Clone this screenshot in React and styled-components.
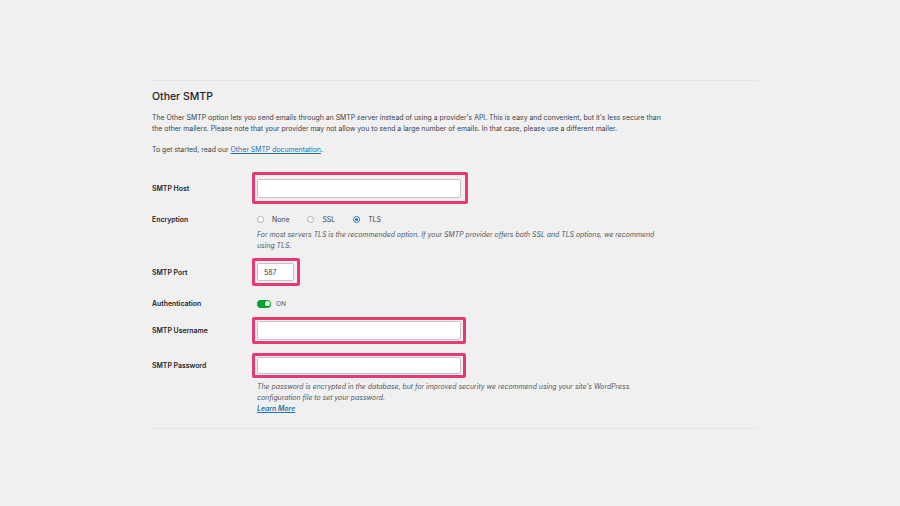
import styled, { createGlobalStyle } from 'styled-components';

const GlobalStyle = createGlobalStyle`
  html, body {
    margin: 0;
    padding: 0;
    background: #f0f0f1;
  }
  body {
    font-family: Inter, "Liberation Sans", Arial, sans-serif;
    color: #3c434a;
  }
`;

const Page = styled.div`
  min-height: 506px;
  padding-top: 80px;
  box-sizing: border-box;
`;

const Section = styled.div`
  margin-left: 152px;
  width: 606px;
  border-top: 1px solid #e6e6e7;
  border-bottom: 1px solid #e6e6e7;
  padding-bottom: 14px;
`;

const Heading = styled.h2`
  margin: 9px 0 0;
  font-size: 10.5px;
  line-height: 14px;
  font-weight: 500;
  color: #1d2327;
`;

const Desc = styled.p`
  margin: ${p => p.$top || 0}px 0 0;
  font-size: 6.9px;
  line-height: 11px;
  color: #3c434a;
`;

const Link = styled.a`
  color: #2271b1;
  text-decoration: underline;
`;

const Row = styled.div`
  display: grid;
  grid-template-columns: 105px 1fr;
  align-items: ${p => p.$align || 'center'};
  margin-top: ${p => p.$top}px;
`;

const Label = styled.div`
  font-size: 6.9px;
  line-height: 11px;
  font-weight: 600;
  color: #1d2327;
`;

const Field = styled.div`
  display: flex;
  flex-direction: column;
  align-items: flex-start;
`;

const Highlight = styled.div`
  border: 3px solid #ea386e;
  border-radius: 2px;
  padding: ${p => p.$pad};
  margin-left: -5px;
  display: flex;
`;

const Input = styled.div`
  width: ${p => p.$w}px;
  height: ${p => p.$h}px;
  background: #fff;
  border: 1px solid #c3c4c7;
  border-radius: 2px;
  box-sizing: border-box;
  font-size: 6.9px;
  color: #2c3338;
  display: flex;
  align-items: center;
  padding-left: 6px;
`;

const Radios = styled.div`
  display: flex;
  align-items: center;
  height: 11px;
  gap: 18px;
`;

const RadioItem = styled.label`
  display: flex;
  align-items: center;
  gap: 8px;
  font-size: 6.9px;
  color: #3c434a;
`;

const RadioCircle = styled.span`
  width: 7px;
  height: 7px;
  border-radius: 50%;
  box-sizing: border-box;
  border: 1px solid ${p => (p.$on ? '#2271b1' : '#a7aaad')};
  background: #fff;
  display: flex;
  align-items: center;
  justify-content: center;
  &::after {
    content: '';
    width: 3px;
    height: 3px;
    border-radius: 50%;
    background: ${p => (p.$on ? '#2271b1' : 'transparent')};
  }
`;

const Help = styled.p`
  margin: ${p => p.$top || 0}px 0 0;
  font-size: 6.9px;
  line-height: 11px;
  font-style: italic;
  color: #50575e;
`;

const ToggleWrap = styled.div`
  display: flex;
  align-items: center;
  gap: 5px;
  height: 11px;
  font-size: 6.6px;
  color: #50575e;
`;

const Toggle = styled.span`
  width: 14px;
  height: 8px;
  border-radius: 4px;
  background: #00a32a;
  display: flex;
  align-items: center;
  justify-content: flex-end;
  padding: 0 1.5px;
  box-sizing: border-box;
  &::after {
    content: '';
    width: 5px;
    height: 5px;
    border-radius: 50%;
    background: #fff;
  }
`;

const LearnMore = styled.a`
  font-size: 6.9px;
  line-height: 11px;
  font-weight: 600;
  font-style: italic;
  color: #2271b1;
  text-decoration: underline;
`;

export default function App() {
  return (
    <Page>
      <GlobalStyle />
      <Section>
        <Heading>Other SMTP</Heading>
        <Desc $top={8}>
          The Other SMTP option lets you send emails through an SMTP server instead of using a provider's API. This is easy and convenient, but it's less secure than
          <br />
          the other mailers. Please note that your provider may not allow you to send a large number of emails. In that case, please use a different mailer.
        </Desc>
        <Desc $top={10}>
          To get started, read our <Link href="#">Other SMTP documentation</Link>.
        </Desc>

        <Row $top={17}>
          <Label>SMTP Host</Label>
          <Field>
            <Highlight $pad="4px 4px 3px 2px">
              <Input $w={204} $h={19} />
            </Highlight>
          </Field>
        </Row>

        <Row $top={10} $align="start">
          <Label>Encryption</Label>
          <Field>
            <Radios>
              <RadioItem><RadioCircle />None</RadioItem>
              <RadioItem><RadioCircle />SSL</RadioItem>
              <RadioItem><RadioCircle $on />TLS</RadioItem>
            </Radios>
            <Help $top={4}>
              For most servers TLS is the recommended option. If your SMTP provider offers both SSL and TLS options, we recommend
              <br />
              using TLS.
            </Help>
          </Field>
        </Row>

        <Row $top={7}>
          <Label>SMTP Port</Label>
          <Field>
            <Highlight $pad="2px 3px 2px 2px">
              <Input $w={37} $h={18}>587</Input>
            </Highlight>
          </Field>
        </Row>

        <Row $top={12}>
          <Label>Authentication</Label>
          <Field>
            <ToggleWrap>
              <Toggle />
              ON
            </ToggleWrap>
          </Field>
        </Row>

        <Row $top={8}>
          <Label>SMTP Username</Label>
          <Field>
            <Highlight $pad="1px 2px 1px 2px">
              <Input $w={204} $h={19} />
            </Highlight>
          </Field>
        </Row>

        <Row $top={9}>
          <Label>SMTP Password</Label>
          <Field>
            <Highlight $pad="1px 2px 1px 2px">
              <Input $w={204} $h={17} />
            </Highlight>
          </Field>
        </Row>

        <Row $top={3} $align="start">
          <span />
          <Field>
            <Help>
              The password is encrypted in the database, but for improved security we recommend using your site's WordPress
              <br />
              configuration file to set your password.
            </Help>
            <LearnMore href="#">Learn More</LearnMore>
          </Field>
        </Row>
      </Section>
    </Page>
  );
}
